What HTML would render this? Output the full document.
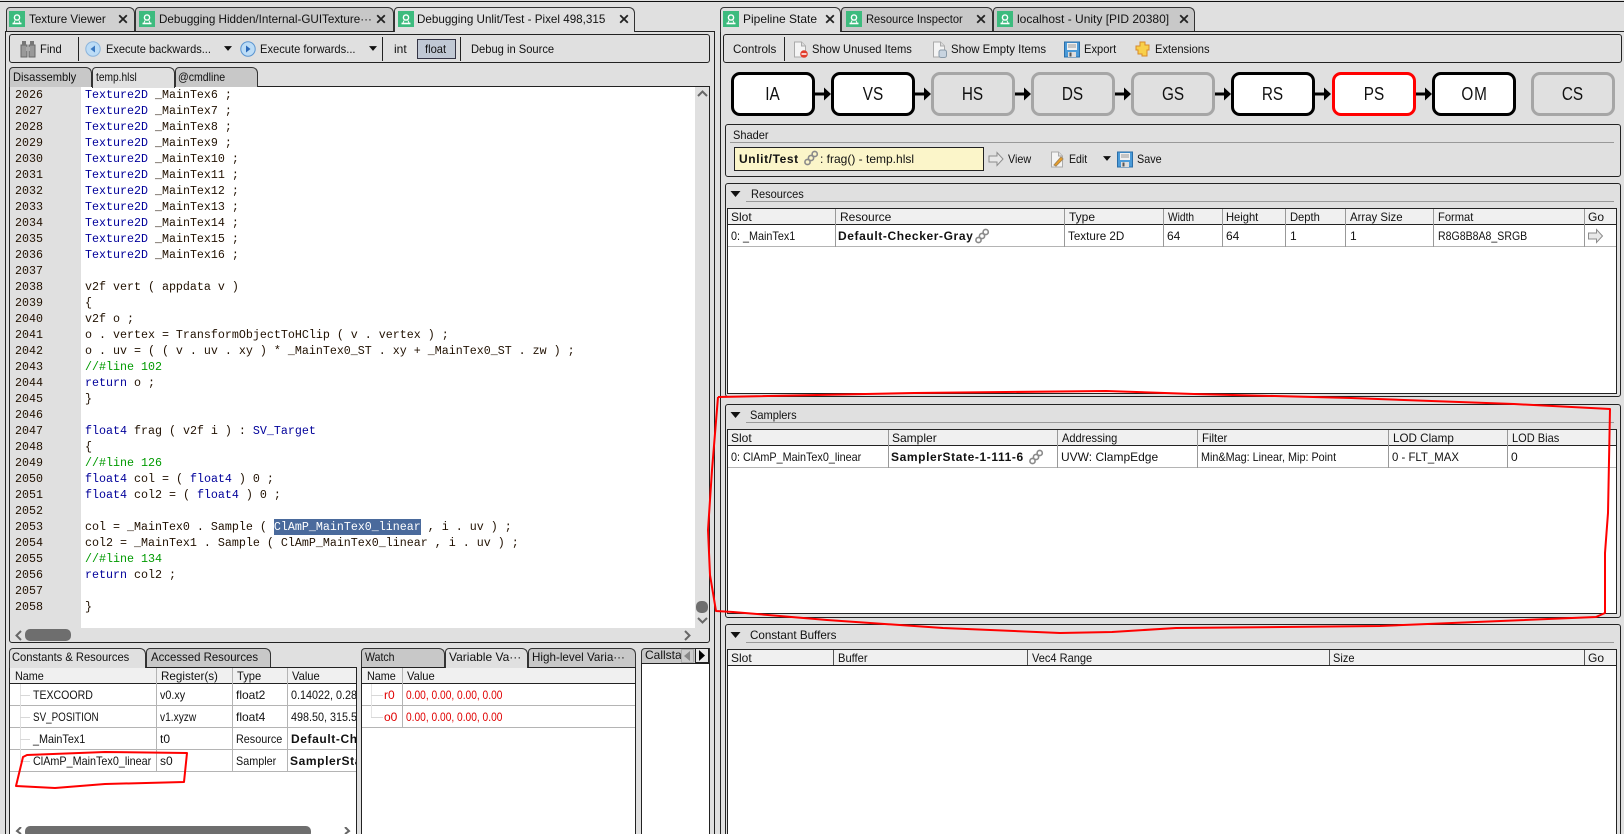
<!DOCTYPE html>
<html><head><meta charset="utf-8"><style>
html,body{margin:0;padding:0;width:1624px;height:834px;overflow:hidden;background:#e0e0e0}
body{position:relative;font:12px/16px "Liberation Sans","IPAGothic",sans-serif;color:#111}
div,span.t,svg{position:absolute}
.t{position:absolute;white-space:nowrap;line-height:16px;height:16px;transform-origin:left center}
.b{font-weight:bold;letter-spacing:.6px}
.x82{transform:scaleX(.82)}.x85{transform:scaleX(.85)}.x88{transform:scaleX(.88)}.x90{transform:scaleX(.9)}.x92{transform:scaleX(.92)}.x93{transform:scaleX(.93)}.x95{transform:scaleX(.95)}.x97{transform:scaleX(.97)}
.box{box-sizing:border-box;border:1px solid #222}
.tab{box-sizing:border-box;border:1px solid #333;border-bottom:none;border-radius:4px 6px 0 0;background:#c8c8c8}
.on{background:#e0e0e0;z-index:3}
.g{background:#3dbb7e;width:16px;height:16px}
.c{font:11.67px/16px "Liberation Mono",monospace;left:85px;white-space:pre;color:#201000;position:absolute;height:16px}
.n{font:11.67px/16px "Liberation Mono",monospace;left:15px;color:#201000;position:absolute}
.k{color:#00009a}.m{color:#009a00}
.pb{box-sizing:border-box;width:84px;height:44px;top:72px;border:3px solid #000;border-radius:9px;background:#fff;text-align:center;font-size:18px;line-height:38px;color:#111}
.pb span{display:inline-block;transform:scaleX(.85)}
.pi{border-color:#a6a6a6;background:#e0e0e0}
.hd{background:#f0f0f0}
.r{color:#e00000}
</style></head><body>
<svg width="0" height="0" style="position:absolute"><defs>
<symbol id="p" viewBox="0 0 16 16"><circle cx="8" cy="6.5" r="2.6" fill="none" stroke="#fff" stroke-width="1.4"/><path d="M3.5 12.5h9" stroke="#fff" stroke-width="1.6"/><path d="M6 9.5l-1 2.5M10 9.5l1 2.5" stroke="#fff"/></symbol>
<symbol id="x" viewBox="0 0 10 10"><path d="M1.2 1.2l7.6 7.6M8.8 1.2l-7.6 7.6" stroke="#222" stroke-width="1.8" fill="none"/></symbol>
<symbol id="ch" viewBox="0 0 16 16"><g fill="none" stroke="#8a8a8a" stroke-width="1.6"><circle cx="4.5" cy="12" r="2.6"/><circle cx="8" cy="8" r="2.6"/><circle cx="11.7" cy="4" r="2.6"/></g></symbol>
<symbol id="ar" viewBox="0 0 16 16"><path d="M1 5h8V1.5L15 8l-6 6.5V11H1z" fill="#e8e8e8" stroke="#8c8c8c"/></symbol>
<symbol id="doc" viewBox="0 0 16 16"><path d="M2.5 .5h7l4 4v11h-11z" fill="#f4f4f4" stroke="#aaa"/><path d="M9.5 .5v4h4" fill="#ddd" stroke="#aaa"/></symbol>
<symbol id="sv" viewBox="0 0 16 16"><rect x=".5" y=".5" width="15" height="15" fill="#4a9ad8" stroke="#2a6ea8"/><rect x="3" y="1.5" width="10" height="7" fill="#f0f0f0"/><path d="M4 3.5h8M4 5.5h8" stroke="#999"/><rect x="4" y="10.5" width="8" height="5" fill="#ddd"/><rect x="5.5" y="11" width="2" height="4" fill="#555"/></symbol>
<symbol id="tr" viewBox="0 0 10 6"><path d="M0 0h10L5 6z" fill="#111"/></symbol>
</defs></svg>

<div style="left:0;top:1px;width:1624px;height:1px;background:#111"></div>

<!-- LEFT PANE -->
<div class="box" style="left:5px;top:31px;width:710px;height:810px"></div>
<div class="tab" style="left:6px;top:7px;width:129px;height:24px;background:#d0d0d0"></div>
<div class="tab" style="left:135px;top:7px;width:259px;height:24px"></div>
<div class="tab on" style="left:394px;top:7px;width:241px;height:25px"></div>
<div class="g" style="left:9px;top:11px;z-index:4"><svg width="16" height="16"><use href="#p"/></svg></div><span class="t x97" style="left:29px;top:11px;z-index:4">Texture Viewer</span><svg style="left:118px;top:14px;z-index:4" width="10" height="10"><use href="#x"/></svg>
<div class="g" style="left:139px;top:11px;z-index:4"><svg width="16" height="16"><use href="#p"/></svg></div><span class="t x97" style="left:159px;top:11px;z-index:4">Debugging Hidden/Internal-GUITexture···</span><svg style="left:376px;top:14px;z-index:4" width="10" height="10"><use href="#x"/></svg>
<div class="g" style="left:398px;top:11px;z-index:4"><svg width="16" height="16"><use href="#p"/></svg></div><span class="t x97" style="left:417px;top:11px;z-index:4">Debugging Unlit/Test - Pixel 498,315</span><svg style="left:619px;top:14px;z-index:4" width="10" height="10"><use href="#x"/></svg>

<div class="box" style="left:9px;top:34px;width:701px;height:29px;border-radius:3px"></div>
<svg style="left:20px;top:40px" width="16" height="18" viewBox="0 0 16 18"><rect x="1" y="5" width="6" height="12" fill="#999" stroke="#666"/><rect x="9" y="5" width="6" height="12" fill="#999" stroke="#666"/><rect x="2" y="1" width="4" height="4" fill="#777"/><rect x="10" y="1" width="4" height="4" fill="#777"/><rect x="6" y="7" width="4" height="4" fill="#aaa"/></svg>
<span class="t x93" style="left:40px;top:41px">Find</span>
<div style="left:78px;top:37px;width:1px;height:24px;background:#222"></div>
<svg style="left:85px;top:41px" width="16" height="16"><circle cx="8" cy="8" r="7.2" fill="#bcdcf6" stroke="#8ab4dc"/><path d="M10 4.5v7L5.5 8z" fill="#3a78c0"/></svg>
<span class="t x92" style="left:106px;top:41px">Execute backwards...</span>
<svg style="left:224px;top:46px" width="8" height="5"><use href="#tr"/></svg>
<svg style="left:240px;top:41px" width="16" height="16"><circle cx="8" cy="8" r="7.2" fill="#bcdcf6" stroke="#5a94d0"/><path d="M6 4.5v7L10.5 8z" fill="#2a68b8"/></svg>
<span class="t x93" style="left:260px;top:41px">Execute forwards...</span>
<svg style="left:369px;top:46px" width="8" height="5"><use href="#tr"/></svg>
<div style="left:382px;top:37px;width:1px;height:24px;background:#222"></div>
<span class="t" style="left:394px;top:41px">int</span>
<div class="box" style="left:417px;top:39px;width:39px;height:20px;background:#c0c8d4;border-color:#334"></div>
<span class="t x93" style="left:425px;top:41px">float</span>
<div style="left:460px;top:37px;width:1px;height:24px;background:#222"></div>
<span class="t x93" style="left:471px;top:41px">Debug in Source</span>

<div class="box" style="left:9px;top:86px;width:701px;height:557px;border-radius:0 0 3px 3px"></div>
<div class="tab" style="left:9px;top:67px;width:83px;height:20px"></div>
<div class="tab on" style="left:92px;top:67px;width:83px;height:21px"></div>
<div class="tab" style="left:175px;top:67px;width:83px;height:20px"></div>
<span class="t x93" style="left:13px;top:69px;z-index:4">Disassembly</span>
<span class="t x85" style="left:96px;top:69px;z-index:4">temp.hlsl</span>
<span class="t x88" style="left:178px;top:69px;z-index:4">@cmdline</span>

<div style="left:81px;top:87px;width:614px;height:541px;background:#fff"></div>
<span class="n" style="top:87px">2026</span><span class="c" style="top:87px"><span class="k">Texture2D</span> _MainTex6 ;</span>
<span class="n" style="top:103px">2027</span><span class="c" style="top:103px"><span class="k">Texture2D</span> _MainTex7 ;</span>
<span class="n" style="top:119px">2028</span><span class="c" style="top:119px"><span class="k">Texture2D</span> _MainTex8 ;</span>
<span class="n" style="top:135px">2029</span><span class="c" style="top:135px"><span class="k">Texture2D</span> _MainTex9 ;</span>
<span class="n" style="top:151px">2030</span><span class="c" style="top:151px"><span class="k">Texture2D</span> _MainTex10 ;</span>
<span class="n" style="top:167px">2031</span><span class="c" style="top:167px"><span class="k">Texture2D</span> _MainTex11 ;</span>
<span class="n" style="top:183px">2032</span><span class="c" style="top:183px"><span class="k">Texture2D</span> _MainTex12 ;</span>
<span class="n" style="top:199px">2033</span><span class="c" style="top:199px"><span class="k">Texture2D</span> _MainTex13 ;</span>
<span class="n" style="top:215px">2034</span><span class="c" style="top:215px"><span class="k">Texture2D</span> _MainTex14 ;</span>
<span class="n" style="top:231px">2035</span><span class="c" style="top:231px"><span class="k">Texture2D</span> _MainTex15 ;</span>
<span class="n" style="top:247px">2036</span><span class="c" style="top:247px"><span class="k">Texture2D</span> _MainTex16 ;</span>
<span class="n" style="top:263px">2037</span>
<span class="n" style="top:279px">2038</span><span class="c" style="top:279px">v2f vert ( appdata v )</span>
<span class="n" style="top:295px">2039</span><span class="c" style="top:295px">{</span>
<span class="n" style="top:311px">2040</span><span class="c" style="top:311px">v2f o ;</span>
<span class="n" style="top:327px">2041</span><span class="c" style="top:327px">o . vertex = TransformObjectToHClip ( v . vertex ) ;</span>
<span class="n" style="top:343px">2042</span><span class="c" style="top:343px">o . uv = ( ( v . uv . xy ) * _MainTex0_ST . xy + _MainTex0_ST . zw ) ;</span>
<span class="n" style="top:359px">2043</span><span class="c m" style="top:359px">//#line 102</span>
<span class="n" style="top:375px">2044</span><span class="c" style="top:375px"><span class="k">return</span> o ;</span>
<span class="n" style="top:391px">2045</span><span class="c" style="top:391px">}</span>
<span class="n" style="top:407px">2046</span>
<span class="n" style="top:423px">2047</span><span class="c" style="top:423px"><span class="k">float4</span> frag ( v2f i ) : <span class="k">SV_Target</span></span>
<span class="n" style="top:439px">2048</span><span class="c" style="top:439px">{</span>
<span class="n" style="top:455px">2049</span><span class="c m" style="top:455px">//#line 126</span>
<span class="n" style="top:471px">2050</span><span class="c" style="top:471px"><span class="k">float4</span> col = ( <span class="k">float4</span> ) 0 ;</span>
<span class="n" style="top:487px">2051</span><span class="c" style="top:487px"><span class="k">float4</span> col2 = ( <span class="k">float4</span> ) 0 ;</span>
<span class="n" style="top:503px">2052</span>
<span class="n" style="top:519px">2053</span><div style="left:274px;top:519px;width:147px;height:16px;background:#4a6a9c"></div><span class="c" style="top:519px">col = _MainTex0 . Sample ( <span style="color:#fff">ClAmP_MainTex0_linear</span> , i . uv ) ;</span>
<span class="n" style="top:535px">2054</span><span class="c" style="top:535px">col2 = _MainTex1 . Sample ( ClAmP_MainTex0_linear , i . uv ) ;</span>
<span class="n" style="top:551px">2055</span><span class="c m" style="top:551px">//#line 134</span>
<span class="n" style="top:567px">2056</span><span class="c" style="top:567px"><span class="k">return</span> col2 ;</span>
<span class="n" style="top:583px">2057</span>
<span class="n" style="top:599px">2058</span><span class="c" style="top:599px">}</span>

<svg style="left:697px;top:89px" width="11" height="9"><path d="M1 7l4.5-4.5L10 7" fill="none" stroke="#666" stroke-width="2"/></svg>
<div style="left:696px;top:601px;width:12px;height:12px;background:#6e6e6e;border-radius:5px"></div>
<svg style="left:697px;top:616px" width="11" height="9"><path d="M1 2l4.5 4.5L10 2" fill="none" stroke="#666" stroke-width="2"/></svg>
<svg style="left:14px;top:630px" width="9" height="11"><path d="M7 1L2.5 5.5 7 10" fill="none" stroke="#666" stroke-width="2"/></svg>
<div style="left:25px;top:629px;width:46px;height:12px;background:#6e6e6e;border-radius:5px"></div>
<svg style="left:683px;top:630px" width="9" height="11"><path d="M2 1l4.5 4.5L2 10" fill="none" stroke="#666" stroke-width="2"/></svg>

<!-- bottom left table -->
<div class="tab on" style="left:9px;top:648px;width:137px;height:20px"></div>
<div class="tab" style="left:146px;top:648px;width:125px;height:19px"></div>
<span class="t x93" style="left:12px;top:649px;z-index:4">Constants &amp; Resources</span>
<span class="t x95" style="left:151px;top:649px;z-index:4">Accessed Resources</span>
<div class="box" style="left:9px;top:667px;width:348px;height:180px;background:#fff"></div>
<div class="hd" style="left:10px;top:668px;width:346px;height:15px;border-bottom:1px solid #222"></div>
<div style="left:156px;top:668px;width:1px;height:103px;background:#b4b4b4"></div>
<div style="left:232px;top:668px;width:1px;height:103px;background:#b4b4b4"></div>
<div style="left:287px;top:668px;width:1px;height:103px;background:#b4b4b4"></div>
<div style="left:10px;top:705px;width:346px;height:1px;background:#b4b4b4"></div>
<div style="left:10px;top:727px;width:346px;height:1px;background:#b4b4b4"></div>
<div style="left:10px;top:749px;width:346px;height:1px;background:#b4b4b4"></div>
<div style="left:10px;top:771px;width:346px;height:1px;background:#b4b4b4"></div>
<span class="t x90" style="left:15px;top:668px">Name</span><span class="t x97" style="left:161px;top:668px">Register(s)</span><span class="t x93" style="left:237px;top:668px">Type</span><span class="t x93" style="left:292px;top:668px">Value</span>
<div style="left:20px;top:684px;width:1px;height:77px;background:#e0e0e0"></div>
<div style="left:20px;top:695px;width:10px;height:1px;background:#d8d8d8"></div><div style="left:20px;top:717px;width:10px;height:1px;background:#d8d8d8"></div><div style="left:20px;top:739px;width:10px;height:1px;background:#d8d8d8"></div><div style="left:20px;top:761px;width:10px;height:1px;background:#d8d8d8"></div>
<span class="t x88" style="left:33px;top:687px">TEXCOORD</span><span class="t x90" style="left:160px;top:687px">v0.xy</span><span class="t" style="left:236px;top:687px">float2</span><div style="left:291px;top:687px;width:65px;height:16px;overflow:hidden"><span class="t x90" style="left:0;top:0">0.14022, 0.28</span></div>
<span class="t x82" style="left:33px;top:709px">SV_POSITION</span><span class="t x85" style="left:160px;top:709px">v1.xyzw</span><span class="t" style="left:236px;top:709px">float4</span><div style="left:291px;top:709px;width:65px;height:16px;overflow:hidden"><span class="t x90" style="left:0;top:0">498.50, 315.5</span></div>
<span class="t x90" style="left:33px;top:731px">_MainTex1</span><span class="t" style="left:160px;top:731px">t0</span><span class="t x90" style="left:236px;top:731px">Resource</span><div style="left:291px;top:731px;width:65px;height:16px;overflow:hidden"><span class="t b" style="left:0;top:0">Default-Ch</span></div>
<span class="t x90" style="left:33px;top:753px">ClAmP_MainTex0_linear</span><span class="t" style="left:160px;top:753px">s0</span><span class="t x90" style="left:236px;top:753px">Sampler</span><div style="left:290px;top:753px;width:66px;height:16px;overflow:hidden"><span class="t b" style="left:0;top:0">SamplerSta</span></div>
<svg style="left:14px;top:827px" width="9" height="7"><path d="M7 0L3 4l4 3" fill="none" stroke="#666" stroke-width="2"/></svg>
<div style="left:25px;top:826px;width:286px;height:12px;background:#6e6e6e;border-radius:5px"></div>
<svg style="left:343px;top:827px" width="9" height="7"><path d="M2 0l4 4-4 3" fill="none" stroke="#666" stroke-width="2"/></svg>

<!-- watch panel -->
<div class="tab" style="left:361px;top:648px;width:84px;height:19px"></div>
<div class="tab on" style="left:445px;top:648px;width:83px;height:20px"></div>
<div class="tab" style="left:528px;top:648px;width:108px;height:19px"></div>
<span class="t x88" style="left:365px;top:649px;z-index:4">Watch</span><span class="t" style="left:449px;top:649px;z-index:4">Variable Va···</span><span class="t x97" style="left:532px;top:649px;z-index:4">High-level Varia···</span>
<div class="box" style="left:361px;top:667px;width:275px;height:180px;background:#fff"></div>
<div class="hd" style="left:362px;top:668px;width:273px;height:15px;border-bottom:1px solid #222"></div>
<div style="left:402px;top:668px;width:1px;height:59px;background:#b4b4b4"></div>
<div style="left:362px;top:705px;width:273px;height:1px;background:#b4b4b4"></div>
<div style="left:362px;top:727px;width:273px;height:1px;background:#b4b4b4"></div>
<span class="t x90" style="left:367px;top:668px">Name</span><span class="t x93" style="left:407px;top:668px">Value</span>
<div style="left:371px;top:684px;width:1px;height:33px;background:#e4e4e4"></div><div style="left:371px;top:695px;width:12px;height:1px;background:#d8d8d8"></div><div style="left:371px;top:717px;width:12px;height:1px;background:#d8d8d8"></div>
<span class="t r" style="left:384px;top:687px">r0</span><span class="t r x85" style="left:406px;top:687px">0.00, 0.00, 0.00, 0.00</span>
<span class="t r" style="left:384px;top:709px">o0</span><span class="t r x85" style="left:406px;top:709px">0.00, 0.00, 0.00, 0.00</span>

<!-- callstack -->
<div class="tab" style="left:641px;top:648px;width:69px;height:16px;border-radius:4px 0 0 0"></div>
<div style="left:642px;top:649px;width:39px;height:14px;overflow:hidden"><span class="t" style="left:3px;top:-2px">Callstack</span></div>
<div class="box" style="left:641px;top:663px;width:69px;height:180px;background:#fff"></div>
<div class="box" style="left:681px;top:649px;width:13px;height:14px;background:#ccc;border-color:#aaa"></div><svg style="left:684px;top:651px" width="6" height="10"><path d="M6 0v10L0 5z" fill="#888"/></svg>
<div class="box" style="left:695px;top:648px;width:14px;height:15px;background:#e8e8e8"></div><svg style="left:699px;top:650px" width="6" height="11"><path d="M0 0v11l6-5.500z" fill="#000"/></svg>

<!-- RIGHT PANE -->
<div class="box" style="left:720px;top:31px;width:920px;height:810px"></div>
<div class="tab on" style="left:720px;top:7px;width:121px;height:25px"></div>
<div class="tab" style="left:841px;top:7px;width:152px;height:24px"></div>
<div class="tab" style="left:993px;top:7px;width:202px;height:24px"></div>
<div class="g" style="left:723px;top:11px;z-index:4"><svg width="16" height="16"><use href="#p"/></svg></div><span class="t" style="left:743px;top:11px;z-index:4">Pipeline State</span><svg style="left:825px;top:14px;z-index:4" width="10" height="10"><use href="#x"/></svg>
<div class="g" style="left:846px;top:11px;z-index:4"><svg width="16" height="16"><use href="#p"/></svg></div><span class="t x93" style="left:866px;top:11px;z-index:4">Resource Inspector</span><svg style="left:976px;top:14px;z-index:4" width="10" height="10"><use href="#x"/></svg>
<div class="g" style="left:997px;top:11px;z-index:4"><svg width="16" height="16"><use href="#p"/></svg></div><span class="t" style="left:1017px;top:11px;z-index:4">localhost - Unity [PID 20380]</span><svg style="left:1179px;top:14px;z-index:4" width="10" height="10"><use href="#x"/></svg>

<div class="box" style="left:723px;top:34px;width:899px;height:29px;border-radius:3px"></div>
<span class="t x97" style="left:733px;top:41px">Controls</span>
<div style="left:784px;top:37px;width:1px;height:24px;background:#222"></div>
<svg style="left:792px;top:41px" width="16" height="17"><use href="#doc"/><circle cx="12" cy="13" r="3.8" fill="#e23b2a"/><path d="M9.500 13h5" stroke="#fff" stroke-width="1.500"/></svg>
<span class="t x93" style="left:812px;top:41px">Show Unused Items</span>
<svg style="left:931px;top:41px" width="16" height="17"><use href="#doc"/><rect x="8" y="9" width="7.500" height="7.500" rx="2" fill="#c8d4e0" stroke="#8a9aa8"/></svg>
<span class="t x95" style="left:951px;top:41px">Show Empty Items</span>
<svg style="left:1064px;top:41px" width="16" height="17"><use href="#sv"/></svg>
<span class="t x93" style="left:1084px;top:41px">Export</span>
<svg style="left:1135px;top:41px" width="16" height="16" viewBox="0 0 16 16"><path d="M5 1h5v3h4v5h-2v6H7v-2H3V9H1V5h4z" fill="#f8d04a" stroke="#d88a2a"/></svg>
<span class="t x93" style="left:1155px;top:41px">Extensions</span>

<!-- pipeline -->
<div class="pb" style="left:731px"><span>IA</span></div>
<div class="pb" style="left:831px"><span>VS</span></div>
<div class="pb pi" style="left:931px"><span>HS</span></div>
<div class="pb pi" style="left:1031px"><span>DS</span></div>
<div class="pb pi" style="left:1131px"><span>GS</span></div>
<div class="pb" style="left:1231px"><span>RS</span></div>
<div class="pb" style="left:1332px;border-color:#f00"><span>PS</span></div>
<div class="pb" style="left:1432px"><span style="letter-spacing:1px">OM</span></div>
<div class="pb pi" style="left:1531px"><span>CS</span></div>
<svg style="left:815px;top:86px" width="17" height="16"><path d="M0 8h10" stroke="#000" stroke-width="3"/><path d="M9 1.500L16 8 9 14.500z" fill="#000"/></svg>
<svg style="left:915px;top:86px" width="17" height="16"><path d="M0 8h10" stroke="#000" stroke-width="3"/><path d="M9 1.500L16 8 9 14.500z" fill="#000"/></svg>
<svg style="left:1015px;top:86px" width="17" height="16"><path d="M0 8h10" stroke="#000" stroke-width="3"/><path d="M9 1.500L16 8 9 14.500z" fill="#000"/></svg>
<svg style="left:1115px;top:86px" width="17" height="16"><path d="M0 8h10" stroke="#000" stroke-width="3"/><path d="M9 1.500L16 8 9 14.500z" fill="#000"/></svg>
<svg style="left:1215px;top:86px" width="17" height="16"><path d="M0 8h10" stroke="#000" stroke-width="3"/><path d="M9 1.500L16 8 9 14.500z" fill="#000"/></svg>
<svg style="left:1315px;top:86px" width="17" height="16"><path d="M0 8h10" stroke="#000" stroke-width="3"/><path d="M9 1.500L16 8 9 14.500z" fill="#000"/></svg>
<svg style="left:1416px;top:86px" width="17" height="16"><path d="M0 8h10" stroke="#000" stroke-width="3"/><path d="M9 1.500L16 8 9 14.500z" fill="#000"/></svg>

<!-- Shader group -->
<div class="box" style="left:725px;top:124px;width:896px;height:53px;border-radius:3px"></div>
<span class="t x92" style="left:733px;top:127px">Shader</span>
<div style="left:730px;top:142px;width:884px;height:1px;background:#999"></div>
<div class="box" style="left:734px;top:147px;width:250px;height:24px;background:#fbf5c9"></div>
<span class="t b" style="left:739px;top:151px">Unlit/Test</span>
<svg style="left:803px;top:150px" width="16" height="16"><use href="#ch"/></svg>
<span class="t" style="left:820px;top:151px">: frag() - temp.hlsl</span>
<svg style="left:988px;top:151px" width="16" height="16"><use href="#ar"/></svg>
<span class="t x90" style="left:1008px;top:151px">View</span>
<svg style="left:1049px;top:151px" width="16" height="17"><use href="#doc"/><path d="M5 14l7-8 2 2-7 7z" fill="#f0a020" stroke="#a85"/></svg>
<span class="t x88" style="left:1069px;top:151px">Edit</span>
<svg style="left:1103px;top:156px" width="8" height="5"><use href="#tr"/></svg>
<svg style="left:1117px;top:151px" width="16" height="17"><use href="#sv"/></svg>
<span class="t x90" style="left:1137px;top:151px">Save</span>

<!-- Resources group -->
<div class="box" style="left:725px;top:183px;width:896px;height:214px;border-radius:3px"></div>
<svg style="left:730px;top:191px" width="11" height="6"><use href="#tr"/></svg>
<span class="t x92" style="left:751px;top:186px">Resources</span>
<div style="left:746px;top:201px;width:868px;height:1px;background:#999"></div>
<div class="box" style="left:727px;top:208px;width:890px;height:186px;background:#fff"></div>
<div class="hd" style="left:728px;top:209px;width:888px;height:15px;border-bottom:1px solid #222"></div>
<div style="left:728px;top:246px;width:888px;height:1px;background:#b4b4b4"></div>
<div style="left:835px;top:209px;width:1px;height:38px;background:#999"></div>
<div style="left:1064px;top:209px;width:1px;height:38px;background:#999"></div>
<div style="left:1163px;top:209px;width:1px;height:38px;background:#999"></div>
<div style="left:1222px;top:209px;width:1px;height:38px;background:#999"></div>
<div style="left:1285px;top:209px;width:1px;height:38px;background:#999"></div>
<div style="left:1345px;top:209px;width:1px;height:38px;background:#999"></div>
<div style="left:1433px;top:209px;width:1px;height:38px;background:#999"></div>
<div style="left:1584px;top:209px;width:1px;height:38px;background:#999"></div>
<span class="t" style="left:731px;top:209px">Slot</span><span class="t" style="left:840px;top:209px">Resource</span><span class="t" style="left:1069px;top:209px">Type</span><span class="t x85" style="left:1168px;top:209px">Width</span><span class="t x93" style="left:1226px;top:209px">Height</span><span class="t x93" style="left:1290px;top:209px">Depth</span><span class="t x95" style="left:1350px;top:209px">Array Size</span><span class="t x93" style="left:1438px;top:209px">Format</span><span class="t" style="left:1588px;top:209px">Go</span>
<span class="t x90" style="left:731px;top:228px">0: _MainTex1</span><span class="t b" style="left:838px;top:228px">Default-Checker-Gray</span>
<svg style="left:974px;top:228px" width="16" height="16"><use href="#ch"/></svg>
<span class="t x97" style="left:1068px;top:228px">Texture 2D</span><span class="t" style="left:1167px;top:228px">64</span><span class="t" style="left:1226px;top:228px">64</span><span class="t" style="left:1290px;top:228px">1</span><span class="t" style="left:1350px;top:228px">1</span><span class="t x88" style="left:1438px;top:228px">R8G8B8A8_SRGB</span>
<svg style="left:1587px;top:228px" width="17" height="16"><use href="#ar"/></svg>

<!-- Samplers group -->
<div class="box" style="left:725px;top:404px;width:896px;height:214px;border-radius:3px"></div>
<svg style="left:730px;top:412px" width="11" height="6"><use href="#tr"/></svg>
<span class="t x92" style="left:750px;top:407px">Samplers</span>
<div style="left:746px;top:422px;width:868px;height:1px;background:#999"></div>
<div class="box" style="left:727px;top:429px;width:890px;height:185px;background:#fff"></div>
<div class="hd" style="left:728px;top:430px;width:888px;height:15px;border-bottom:1px solid #222"></div>
<div style="left:728px;top:467px;width:888px;height:1px;background:#b4b4b4"></div>
<div style="left:888px;top:430px;width:1px;height:38px;background:#999"></div>
<div style="left:1057px;top:430px;width:1px;height:38px;background:#999"></div>
<div style="left:1197px;top:430px;width:1px;height:38px;background:#999"></div>
<div style="left:1388px;top:430px;width:1px;height:38px;background:#999"></div>
<div style="left:1507px;top:430px;width:1px;height:38px;background:#999"></div>
<span class="t" style="left:731px;top:430px">Slot</span><span class="t" style="left:892px;top:430px">Sampler</span><span class="t x92" style="left:1062px;top:430px">Addressing</span><span class="t x95" style="left:1202px;top:430px">Filter</span><span class="t x97" style="left:1393px;top:430px">LOD Clamp</span><span class="t x92" style="left:1512px;top:430px">LOD Bias</span>
<span class="t x90" style="left:731px;top:449px">0: ClAmP_MainTex0_linear</span><span class="t b" style="left:891px;top:449px">SamplerState-1-111-6</span>
<svg style="left:1028px;top:449px" width="16" height="16"><use href="#ch"/></svg>
<span class="t" style="left:1061px;top:449px">UVW: ClampEdge</span><span class="t x90" style="left:1201px;top:449px">Min&amp;Mag: Linear, Mip: Point</span><span class="t x95" style="left:1392px;top:449px">0 - FLT_MAX</span><span class="t" style="left:1511px;top:449px">0</span>

<!-- Constant buffers -->
<div class="box" style="left:725px;top:624px;width:896px;height:220px;border-radius:3px"></div>
<svg style="left:730px;top:632px" width="11" height="6"><use href="#tr"/></svg>
<span class="t x97" style="left:750px;top:627px">Constant Buffers</span>
<div style="left:746px;top:642px;width:868px;height:1px;background:#999"></div>
<div class="box" style="left:727px;top:649px;width:890px;height:195px;background:#fff"></div>
<div class="hd" style="left:728px;top:650px;width:888px;height:15px;border-bottom:1px solid #222"></div>
<div style="left:833px;top:650px;width:1px;height:15px;background:#555"></div>
<div style="left:1027px;top:650px;width:1px;height:15px;background:#555"></div>
<div style="left:1329px;top:650px;width:1px;height:15px;background:#555"></div>
<div style="left:1584px;top:650px;width:1px;height:15px;background:#555"></div>
<span class="t" style="left:731px;top:650px">Slot</span><span class="t x93" style="left:838px;top:650px">Buffer</span><span class="t x92" style="left:1032px;top:650px">Vec4 Range</span><span class="t x92" style="left:1333px;top:650px">Size</span><span class="t" style="left:1588px;top:650px">Go</span>

<!-- red annotations -->
<svg style="left:0;top:0;z-index:9" width="1624" height="834"><g fill="none" stroke="#f00" stroke-width="2" stroke-linejoin="round">
<path d="M718 397L914 393 1106 391 1194 394 1351 398 1514 404 1610 409 1608 513 1605 553 1605 613 1596 617 1380 626 1176 628 1112 632 1060 633 943 628 827 620 733 612 716 611 710 575 708 530 712 470 718 397"/>
<path d="M27 755L105 752 187 753 184 782 105 784 55 788 16 786 23 757z"/></g></svg>
</body></html>
